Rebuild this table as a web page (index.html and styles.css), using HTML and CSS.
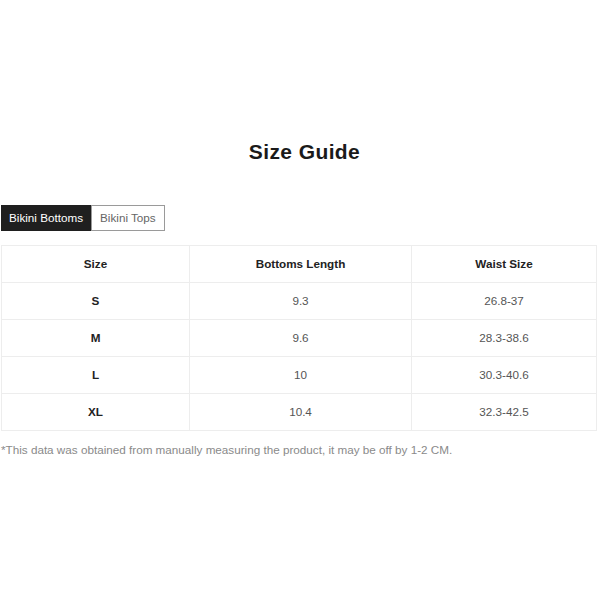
FILE: index.html
```html
<!DOCTYPE html>
<html>
<head>
<meta charset="utf-8">
<link rel="stylesheet" href="styles.css">
</head>
<body>
<div class="page">
  <h1 class="title">Size Guide</h1>
  <div class="tabs">
    <span class="tab active">Bikini Bottoms</span>
    <span class="tab">Bikini Tops</span>
  </div>
  <table class="guide">
    <colgroup>
      <col class="c1"><col class="c2"><col class="c3">
    </colgroup>
    <thead>
      <tr><th>Size</th><th>Bottoms Length</th><th>Waist Size</th></tr>
    </thead>
    <tbody>
      <tr><td class="sz">S</td><td>9.3</td><td>26.8-37</td></tr>
      <tr><td class="sz">M</td><td>9.6</td><td>28.3-38.6</td></tr>
      <tr><td class="sz">L</td><td>10</td><td>30.3-40.6</td></tr>
      <tr><td class="sz">XL</td><td>10.4</td><td>32.3-42.5</td></tr>
    </tbody>
  </table>
  <p class="note">*This data was obtained from manually measuring the product, it may be off by 1-2 CM.</p>
</div>
</body>
</html>
```
FILE: styles.css
```css
html, body {
  margin: 0;
  padding: 0;
  background: #fff;
}
body {
  font-family: "Liberation Sans", Arial, sans-serif;
  color: #222;
}
.page {
  padding: 138px 3px 0 1px;
}
.title {
  margin: 0;
  text-align: center;
  font-size: 21px;
  letter-spacing: 0.4px;
  font-weight: bold;
  color: #1a1a1a;
  line-height: 28px;
  padding-left: 11px;
}
.tabs {
  display: flex;
  margin-top: 39px;
}
.tab {
  font-size: 11.7px;
  line-height: 24px;
  height: 24px;
  padding: 0 8px;
  border: 1px solid #9a9a9a;
  color: #666;
  background: #fff;
}
.tab.active {
  background: #1f1f1f;
  border-color: #1f1f1f;
  color: #fff;
  padding: 0 7px;
}
.guide {
  margin-top: 14px;
  width: 100%;
  border-collapse: collapse;
  table-layout: fixed;
  font-size: 11.7px;
}
.c1 { width: 188px; }
.c2 { width: 222px; }
.guide th, .guide td {
  border: 1px solid #ededed;
  height: 34px;
  padding: 0 0 2px;
  text-align: center;
  vertical-align: middle;
}
.guide th {
  font-weight: bold;
  color: #222;
}
.guide td {
  color: #555;
}
.guide td.sz {
  font-weight: bold;
  color: #222;
}
.note {
  margin: 12px 0 0;
  font-size: 11.7px;
  color: #8a8a8a;
}
```
